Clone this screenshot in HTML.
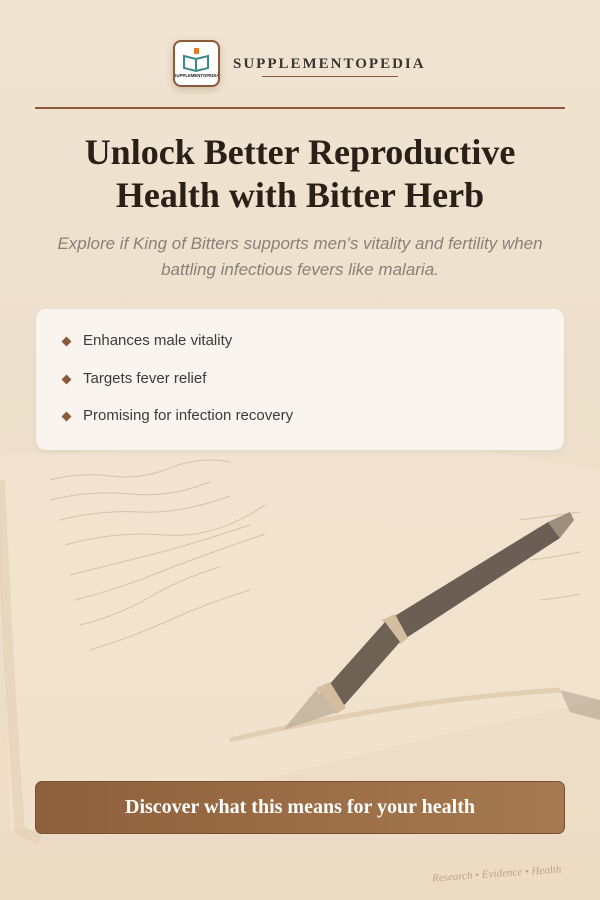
<!DOCTYPE html>
<html><head><meta charset="utf-8"><style>
*{margin:0;padding:0;box-sizing:border-box}
html,body{width:600px;height:900px;overflow:hidden}
body{position:relative;background:linear-gradient(180deg,#f0e4d2 0%,#ede0cc 40%,#eddcc4 100%);font-family:"Liberation Sans",sans-serif}
.bg{position:absolute;left:0;top:0}
.logo{position:absolute;left:173px;top:40px;width:47px;height:47px;border:2px solid #8a5a3a;border-radius:8px;background:#fff;box-shadow:0 3px 8px rgba(120,80,40,.25)}
.brand{position:absolute;left:233px;top:56px;font-family:"Liberation Serif",serif;font-weight:bold;font-size:15px;letter-spacing:2px;color:#3a3530}
.bline{position:absolute;left:262px;top:76px;width:136px;height:1px;background:#8a5a3a}
.hr{position:absolute;left:35px;top:107px;width:530px;height:2px;background:#8a5a3a}
h1{position:absolute;left:0;top:131px;width:600px;text-align:center;font-family:"Liberation Serif",serif;font-weight:bold;font-size:36px;line-height:43px;color:#2a2018}
.sub{position:absolute;left:30px;top:231px;width:540px;text-align:center;font-style:italic;font-size:17px;line-height:26px;color:#8a8078}
.card{position:absolute;left:36px;top:309px;width:528px;height:141px;background:rgba(250,246,240,.93);border-radius:10px;box-shadow:0 2px 6px rgba(0,0,0,.05)}
.card div{position:absolute;left:47px;font-size:15px;color:#3f3a35}
.card div:before{content:"";position:absolute;left:-20px;top:6px;width:7px;height:7px;background:#8a5a3a;transform:rotate(45deg)}
.btn{position:absolute;left:35px;top:781px;width:530px;height:53px;border-radius:7px;background:linear-gradient(90deg,#8f603c,#a67a50);border:1px solid #7a5030;color:#fff;font-family:"Liberation Serif",serif;font-weight:bold;font-size:20px;text-align:center;line-height:51px}
.foot{position:absolute;left:432px;top:868px;font-family:"Liberation Serif",serif;font-style:italic;font-size:11px;color:#b8a38c;transform:rotate(-4deg)}
</style></head><body>
<svg class="bg" width="600" height="900">
<path d="M0 455 L420 440 L600 470 L600 700 L420 740 L60 830 L10 830 Z" fill="#f3e6d2" opacity=".6"/>
<path d="M0 480 Q10 700 20 830 L40 840" stroke="#e0ccae" stroke-width="10" fill="none" opacity=".5"/>
<path d="M230 740 Q400 700 560 690" stroke="#e2cfb2" stroke-width="5" fill="none"/>
<g stroke="#c8b49a" stroke-width="1" fill="none" opacity=".7">
<path d="M50 480 q30-8 60-4 t60-8 t60-6"/><path d="M50 500 q40-10 80-6 t80-12"/><path d="M60 520 q40-10 80-8 t90-16"/>
<path d="M65 545 q50-14 100-10 t100-30"/><path d="M70 575 q40-10 80-20 t100-30"/><path d="M75 600 q40-10 80-26 t110-40"/>
<path d="M80 625 q40-10 70-28 t70-30"/><path d="M90 650 q40-12 80-30 t80-30"/>
<path d="M520 520 q30-4 60-8"/><path d="M530 560 q20-2 50-8"/><path d="M540 600 q20-2 40-6"/>
</g>
<g opacity=".8">
<path d="M385 622 L548 522 L560 538 L400 642 Z" fill="#4a3e36"/>
<path d="M548 522 L570 512 L574 520 L560 538 Z" fill="#8a7a6a"/>
<path d="M382 620 L395 614 L408 638 L400 644 Z" fill="#cdb694"/>
<path d="M320 695 L385 622 L400 642 L340 710 Z" fill="#4e4238"/>
<path d="M316 688 L330 682 L346 708 L336 714 Z" fill="#cdb694"/>
<path d="M283 730 L316 690 L338 712 Z" fill="#c0b09a"/>
</g>
<path d="M560 690 L600 700 L600 720 L570 712 Z" fill="#a89684" opacity=".5"/>
</svg>
<div class="logo"><svg width="43" height="43" viewBox="0 0 43 43"><rect x="19" y="6" width="5" height="6" fill="#e27b2a"/><path d="M9 14 L21 17 L33 14 L33 26 L21 29 L9 26 Z" fill="none" stroke="#3a8a88" stroke-width="2"/><line x1="21" y1="17" x2="21" y2="29" stroke="#3a8a88" stroke-width="2"/><text x="21.5" y="35" font-size="4.3" font-weight="bold" text-anchor="middle" font-family="Liberation Sans" fill="#222">SUPPLEMENTOPEDIA</text></svg></div>
<div class="brand">SUPPLEMENTOPEDIA</div><div class="bline"></div>
<div class="hr"></div>
<h1>Unlock Better Reproductive<br>Health with Bitter Herb</h1>
<div class="sub">Explore if King of Bitters supports men's vitality and fertility when battling infectious fevers like malaria.</div>
<div class="card"><div style="top:23px">Enhances male vitality</div><div style="top:61px">Targets fever relief</div><div style="top:98px">Promising for infection recovery</div></div>
<div class="btn">Discover what this means for your health</div>
<div class="foot">Research • Evidence • Health</div>
</body></html>
